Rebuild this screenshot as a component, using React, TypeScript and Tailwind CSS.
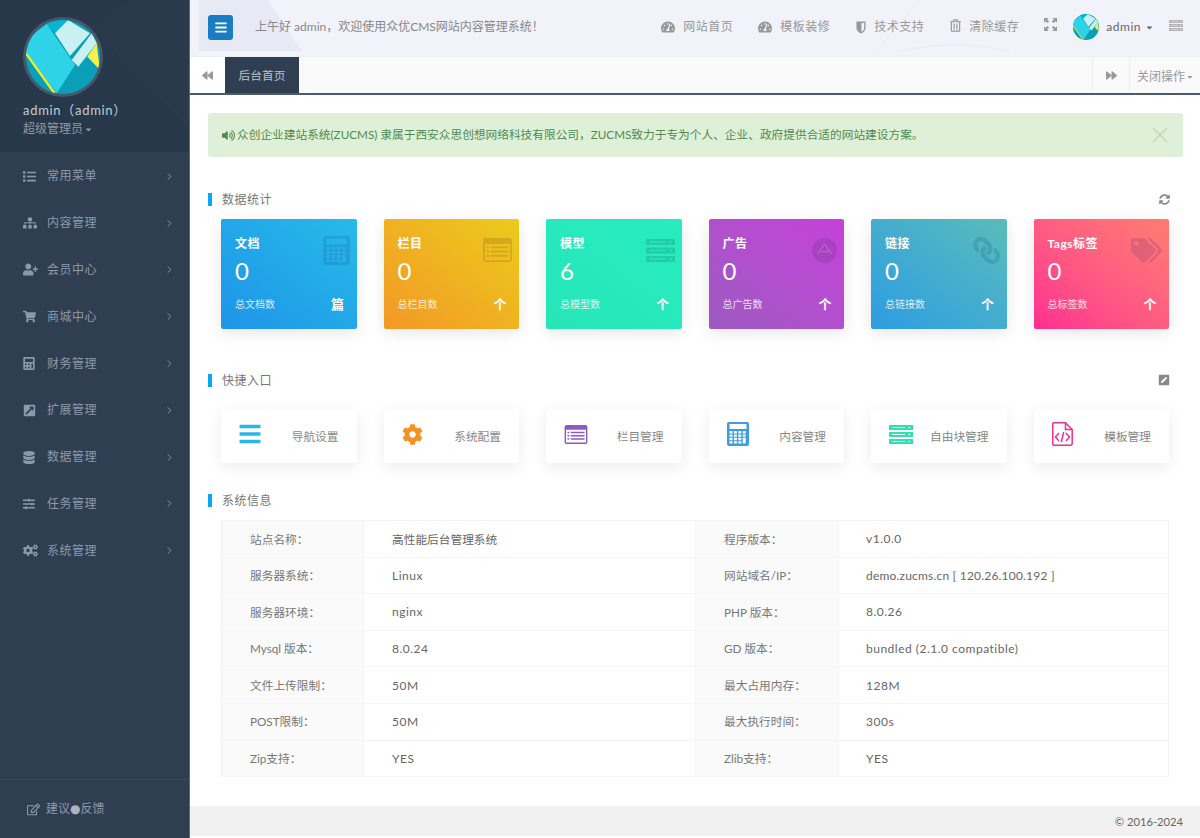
import { useId } from 'react'
import type { ReactNode } from 'react'
import {
  FaBackward,
  FaBars,
  FaCalculator,
  FaCaretDown,
  FaCog,
  FaCogs,
  FaDatabase,
  FaExternalLinkSquareAlt,
  FaForward,
  FaLink,
  FaList,
  FaPenSquare,
  FaRegEdit,
  FaRegTrashAlt,
  FaShoppingCart,
  FaSitemap,
  FaSlidersH,
  FaSyncAlt,
  FaTachometerAlt,
  FaTags,
  FaUserPlus,
  FaVolumeUp,
} from 'react-icons/fa'
import { FiChevronRight, FiX } from 'react-icons/fi'

function Avatar({ className }: { className: string }) {
  const id = useId()
  return (
    <svg viewBox="0 0 74 74" className={className}>
      <defs>
        <clipPath id={id}>
          <circle cx="37" cy="37" r="37" />
        </clipPath>
      </defs>
      <g clipPath={`url(#${id})`}>
        <rect width="74" height="74" fill="#0a9fb8" />
        <polygon points="18,0 46,0 40,20 20,6" fill="#05b5d2" />
        <polygon points="20.7,4 49,45 30.7,73.3 0,32.7 0,20" fill="#2fd3e8" />
        <polygon points="29,13.3 42,0 64,13.3 44,36" fill="#c9f1f1" />
        <polygon points="45.7,40 65.7,13.3 70.7,23.3 52.3,46.7" fill="#c9f1f1" />
        <polygon points="61.3,36.7 70.7,23.3 74,50" fill="#f5f04a" />
        <polygon points="0,31.5 29.5,72.5 27.5,74 0,35.5" fill="#f3e92f" />
      </g>
    </svg>
  )
}

function WindowIcon({ className }: { className: string }) {
  return (
    <svg viewBox="0 0 24 20" className={className} fill="currentColor">
      <path
        fillRule="evenodd"
        d="M2 0h20a2 2 0 0 1 2 2v16a2 2 0 0 1-2 2H2a2 2 0 0 1-2-2V2a2 2 0 0 1 2-2zm-.5 5v13c0 .3.2.5.5.5h20c.3 0 .5-.2.5-.5V5h-21z"
      />
      <path d="M3 7h2v1.6H3zM6.500 7H21v1.600H6.500zM3 10.500h2v1.600H3zM6.500 10.500H21v1.600H6.500zM3 14h2v1.600H3zM6.500 14H21v1.600H6.500z" />
    </svg>
  )
}

function ServerIcon({ className }: { className: string }) {
  return (
    <svg viewBox="0 0 24 19" className={className} fill="currentColor">
      <path
        fillRule="evenodd"
        d="M0 0h24v5H0zM3 2v1h13V2zM19.500 1.700v1.600h1.600V1.700zM0 7h24v5H0zM3 9v1h13V9zM19.500 8.700v1.600h1.600V8.700zM0 14h24v5H0zM3 16v1h13v-1zM19.500 15.700v1.600h1.600v-1.600z"
      />
    </svg>
  )
}

// cells are cut out so the card or tile behind shows through
const calcCells = [0, 1, 2, 3]
  .flatMap((c) =>
    [0, 1, 2, 3].map((r) => (c === 3 && r > 1 ? '' : `M${2.5 + c * 4.4} ${9 + r * 3.4}h3v2.400h-3z`)),
  )
  .join('')

function CalcIcon({ className }: { className: string }) {
  return (
    <svg viewBox="0 0 22 24" className={className} fill="currentColor">
      <path
        fillRule="evenodd"
        d={`M2 0h18a2 2 0 0 1 2 2v20a2 2 0 0 1-2 2H2a2 2 0 0 1-2-2V2a2 2 0 0 1 2-2zM2.500 2v5h17V2z${calcCells}M15.700 15.800h3v5.800h-3z`}
      />
    </svg>
  )
}

function FileCodeIcon({ className }: { className: string }) {
  return (
    <svg viewBox="0 0 21 24" className={className} fill="none" stroke="currentColor" strokeWidth="1.500">
      <path d="M1.500.8h12l6.700 6.700v14a1.700 1.700 0 0 1-1.700 1.700h-17A1.700 1.700 0 0 1 .8 21.500V1.500z" />
      <path d="M13.500.8v6.700h6.700M7 11l-3.500 4 3.500 4M14 11l3.500 4-3.500 4M11.700 10l-2.400 10" />
    </svg>
  )
}

function AdIcon({ className }: { className: string }) {
  return (
    <svg viewBox="0 0 24 24" className={className}>
      <circle cx="12" cy="12" r="12" fill="currentColor" />
      <path d="M5 15.500 12 6l7 9.500M8 13h8" fill="none" stroke="#fff" strokeOpacity="0.18" strokeWidth="1.200" />
    </svg>
  )
}

function ShieldIcon({ className }: { className: string }) {
  return (
    <svg viewBox="0 0 11 13" className={className} fill="currentColor">
      <path
        fillRule="evenodd"
        d="M.5 0h10v7.500C10.500 10 7.500 12 5.500 13 3.500 12 .5 10 .5 7.500zM6 1.500v9.700c1.500-.9 3-2.300 3-3.700v-6z"
      />
    </svg>
  )
}

function ExpandIcon({ className }: { className: string }) {
  return (
    <svg viewBox="0 0 14 14" className={className} fill="currentColor">
      <path d="M0 0h5L3.400 1.600 5.500 3.700 3.700 5.500 1.600 3.400 0 5zM14 0v5l-1.600-1.600-2.100 2.100-1.800-1.800 2.100-2.100L9 0zM0 14V9l1.600 1.600 2.100-2.100 1.800 1.800-2.100 2.100L5 14zM14 14H9l1.600-1.600-2.100-2.100 1.800-1.800 2.100 2.100L14 9z" />
    </svg>
  )
}

const menus: [string, ReactNode][] = [
  ['常用菜单', <FaList className="w-[13px] h-[13px]" />],
  ['内容管理', <FaSitemap className="w-[14px] h-[14px]" />],
  ['会员中心', <FaUserPlus className="w-[15px] h-[15px]" />],
  ['商城中心', <FaShoppingCart className="w-[13px] h-[13px]" />],
  ['财务管理', <FaCalculator className="w-[12px] h-[13px]" />],
  ['扩展管理', <FaExternalLinkSquareAlt className="w-[13px] h-[13px]" />],
  ['数据管理', <FaDatabase className="w-[12px] h-[13px]" />],
  ['任务管理', <FaSlidersH className="w-[12px] h-[12px]" />],
  ['系统管理', <FaCogs className="w-[15px] h-[15px]" />],
]

const topLinks: [string, ReactNode, string][] = [
  ['网站首页', <FaTachometerAlt className="w-[14px] h-[14px]" />, ''],
  ['模板装修', <FaTachometerAlt className="w-[14px] h-[14px]" />, ''],
  ['技术支持', <ShieldIcon className="w-[10px] h-[13px]" />, 'ml-[1px]'],
  ['清除缓存', <FaRegTrashAlt className="w-[11px] h-[15px] -mt-[3px]" />, 'ml-[1px]'],
]

const stats = [
  { title: '文档', value: '0', label: '总文档数', unit: '篇', bg: 'bg-gradient-to-tr from-[#2094e8] to-[#28bae8]', icon: <CalcIcon className="w-[27px] h-[29px] text-[#1a6fb0]/30" /> },
  { title: '栏目', value: '0', label: '总栏目数', unit: '个', bg: 'bg-gradient-to-tr from-[#f29826] to-[#ebcb1a]', icon: <WindowIcon className="w-[29px] h-[24px] text-[#b58a20]/45" /> },
  { title: '模型', value: '6', label: '总模型数', unit: '个', bg: 'bg-gradient-to-tr from-[#26e6b8] to-[#28ecc0]', icon: <ServerIcon className="w-[29px] h-[23px] text-[#1aa98c]/45" /> },
  { title: '广告', value: '0', label: '总广告数', unit: '个', bg: 'bg-gradient-to-tr from-[#9c5ac0] to-[#c640da]', icon: <AdIcon className="w-[25px] h-[25px] text-[#8a3aa0]/40" /> },
  { title: '链接', value: '0', label: '总链接数', unit: '个', bg: 'bg-gradient-to-tr from-[#2c9ce2] to-[#5abcba]', icon: <FaLink className="w-[27px] h-[27px] -scale-x-100 text-[#2a8a9c]/40" /> },
  { title: 'Tags标签', value: '0', label: '总标签数', unit: '个', bg: 'bg-gradient-to-tr from-[#ff2c90] to-[#ff7c70]', icon: <FaTags className="w-[31px] h-[25px] text-[#c85a78]/60" /> },
]

const quicks: [string, ReactNode][] = [
  ['导航设置', <FaBars className="w-[22px] h-[24px] text-[#29b6e6]" />],
  ['系统配置', <FaCog className="w-[21px] h-[21px] text-[#f49322]" />],
  ['栏目管理', <WindowIcon className="w-[24px] h-[19px] text-[#8d5bbf]" />],
  ['内容管理', <CalcIcon className="w-[22px] h-[24px] text-[#3c9de2]" />],
  ['自由块管理', <ServerIcon className="w-[24px] h-[19px] text-[#2fe0b0]" />],
  ['模板管理', <FileCodeIcon className="w-[21px] h-[24px] text-[#ee2f92]" />],
]

const info = [
  ['站点名称：', '高性能后台管理系统', '程序版本：', 'v1.0.0'],
  ['服务器系统：', 'Linux', '网站域名/IP：', 'demo.zucms.cn [ 120.26.100.192 ]'],
  ['服务器环境：', 'nginx', 'PHP 版本：', '8.0.26'],
  ['Mysql 版本：', '8.0.24', 'GD 版本：', 'bundled (2.1.0 compatible)'],
  ['文件上传限制：', '50M', '最大占用内存：', '128M'],
  ['POST限制：', '50M', '最大执行时间：', '300s'],
  ['Zip支持：', 'YES', 'Zlib支持：', 'YES'],
]

function SectionTitle({ title, action, className }: { title: string; action?: ReactNode; className: string }) {
  return (
    <div className={`flex items-center h-[18px] text-[#777] ${className}`}>
      <span className="w-[4px] h-[13px] bg-[#05a9f4]" />
      <span className="ml-[10px] pt-[2px]">{title}</span>
      <span className="ml-auto mr-[13px] text-[#888]">{action}</span>
    </div>
  )
}

export default function App() {
  return (
    <div className="flex w-[1200px] h-[838px] overflow-hidden bg-white text-xs tracking-[0.5px] font-['Lato','Noto_Sans_CJK_SC',sans-serif]">
      {/* Sidebar */}
      <aside className="flex flex-col w-[190px] shrink-0 bg-[#2f3f51] border-r border-[#5a6b7c] text-[#8b9aaa]">
        <div className="relative h-[152px] bg-[#27384a] overflow-hidden pl-[23px] pt-[17px]">
          <svg className="absolute inset-0 w-full h-full" viewBox="0 0 190 152" aria-hidden="true">
            <polygon points="95,30 130,0 190,0 190,130" fill="#2a3a4c" />
          </svg>
          <div className="relative w-[80px] h-[80px] rounded-full bg-[#46586a] p-[3px]">
            <Avatar className="w-[74px] h-[74px]" />
          </div>
          <p className="relative mt-[4px] text-[13px] leading-[18px] tracking-[0.7px] text-[#c3ccd6]">admin（admin）</p>
          <p className="relative mt-[1px] flex items-center leading-[18px] tracking-normal text-[#8d9bab]">
            超级管理员
            <FaCaretDown className="w-[9px] h-[9px] ml-[1px]" />
          </p>
        </div>
        <nav className="flex-1 pt-[1px]">
          {menus.map(([label, icon]) => (
            <div key={label} className="flex items-center h-[46.800px] pl-[23px] pr-[14px]">
              <span className="flex items-center w-[24px]">{icon}</span>
              <span>{label}</span>
              <FiChevronRight className="ml-auto w-[11px] h-[11px]" />
            </div>
          ))}
        </nav>
        <div className="flex items-center h-[59px] border-t border-[#384a5c] pl-[27px] tracking-normal">
          <FaRegEdit className="w-[13px] h-[13px] mr-[6px]" />
          建议<span className="font-['DejaVu_Sans'] text-[#a9b4c0]">●</span>反馈
        </div>
      </aside>

      {/* Main */}
      <div className="flex-1 min-w-0 flex flex-col">
        <header className="relative flex items-center h-[57px] bg-[#f1f2fa] border-b border-[#eceef2] pl-[18px] pr-[17px] pb-[2px] text-[#999]">
          <svg className="absolute inset-0 w-full h-full" viewBox="0 0 1010 57" aria-hidden="true">
            <polygon points="0,0 70,0 105,52 0,52" fill="#e7e9f5" />
            <polyline points="735,0 730,4 690,52" fill="none" stroke="#e8eaf4" />
            <path d="M715,52 C760,42 790,45 825,52" fill="none" stroke="#e8eaf4" />
          </svg>
          <button className="relative flex items-center justify-center w-[25px] h-[25px] rounded-[3px] bg-[#1a7cc3] text-white">
            <FaBars className="w-[12px] h-[13px]" />
          </button>
          <span className="relative ml-[22px] tracking-normal text-[#888]">上午好 admin，欢迎使用众优CMS网站内容管理系统！</span>
          <div className="relative ml-auto flex items-center gap-[25px]">
            {topLinks.map(([label, icon, extra]) => (
              <span key={label} className={`flex items-center gap-[8px] ${extra}`}>
                {icon}
                {label}
              </span>
            ))}
            <ExpandIcon className="w-[13px] h-[13px] -mt-[5px]" />
            <span className="flex items-center -ml-[9px] text-[#666]">
              <Avatar className="w-[26px] h-[26px] mr-[7px]" />
              admin
              <FaCaretDown className="w-[9px] h-[9px] ml-[4px]" />
            </span>
            <ServerIcon className="w-[14px] h-[11px] -ml-[10px] -mt-[3px] opacity-70" />
          </div>
        </header>

        <div className="flex items-stretch h-[38px] bg-[#fafafa] border-b-2 border-[#4c5b6b] text-[#999] tracking-normal">
          <button className="flex items-center justify-center w-[35px] bg-white">
            <FaBackward className="w-[11px] h-[11px]" />
          </button>
          <span className="flex items-center justify-center w-[74px] pt-[1px] bg-[#2f3f51] text-[11.7px] text-[#b9c3cd]">后台首页</span>
          <button className="ml-auto flex items-center justify-center w-[37px] border-l border-[#eeeeee]">
            <FaForward className="w-[11px] h-[11px]" />
          </button>
          <span className="flex items-center w-[71px] pl-[7px] pt-[3px] border-l border-[#eeeeee] whitespace-nowrap">
            关闭操作
            <FaCaretDown className="w-[8px] h-[8px] ml-[1px]" />
          </span>
        </div>

        <main className="flex-1 pl-[18px] pr-[17px]">
          <div className="flex items-center h-[44px] mt-[18px] pl-[14px] pr-[10px] rounded-[3px] bg-[#dff0d8] text-[11.7px] tracking-normal text-[#4f8a50]">
            <FaVolumeUp className="w-[13px] h-[13px] mr-[2px]" />
            众创企业建站系统(ZUCMS) 隶属于西安众思创想网络科技有限公司，ZUCMS致力于专为个人、企业、政府提供合适的网站建设方案。
            <FiX className="ml-auto w-[26px] h-[26px] text-[#c2d8c0]" strokeWidth={1.500} />
          </div>

          <SectionTitle className="mt-[33px] mb-[11px]" title="数据统计" action={<FaSyncAlt className="w-[11px] h-[11px]" />} />
          <div className="grid grid-cols-6 gap-x-[27px] ml-[13px] mr-[14px]">
            {stats.map((s) => (
              <div key={s.title} className={`relative h-[110px] rounded-[2px] px-[14px] text-white shadow-[0_4px_16px_rgba(0,0,0,0.1)] ${s.bg}`}>
                <div className="absolute top-[16px] right-[7px] flex items-center h-[30px]">{s.icon}</div>
                <p className="pt-[17px] leading-[16px] font-bold">{s.title}</p>
                <p className="mt-[5px] text-[24px] leading-[28px]">{s.value}</p>
                <div className="flex items-center justify-between mt-[11px] leading-[16px]">
                  <span className="text-[10px] tracking-normal opacity-80">{s.label}</span>
                  <span className="text-[13px] font-bold -mr-[2px]">{s.unit}</span>
                </div>
              </div>
            ))}
          </div>

          <SectionTitle className="mt-[42px] mb-[20px]" title="快捷入口" action={<FaPenSquare className="w-[12px] h-[12px]" />} />
          <div className="grid grid-cols-6 gap-x-[27px] ml-[13px] mr-[14px]">
            {quicks.map(([label, icon]) => (
              <div key={label} className="relative flex items-center justify-end h-[54px] rounded-[2px] bg-white pr-[18px] text-[11.7px] tracking-normal text-[#888] shadow-[0_4px_16px_rgba(0,0,0,0.08)]">
                <span className="absolute left-[18px] top-[13px] flex items-center h-[24px]">{icon}</span>
                <span className="whitespace-nowrap pt-[2px]">{label}</span>
              </div>
            ))}
          </div>

          <SectionTitle className="mt-[28px] mb-[11px]" title="系统信息" />
          <table className="ml-[13px] w-[948px] table-fixed border-collapse border border-[#f3f3f3] text-[#666]">
            <colgroup>
              <col className="w-[142px]" />
              <col className="w-[332px]" />
              <col className="w-[143px]" />
              <col />
            </colgroup>
            <tbody>
              {info.map((row) => (
                <tr key={row[0]} className="h-[36.600px] border-b border-[#f5f5f5]">
                  <td className="pl-[28px] pt-[1px] bg-[#fafafa] border-r border-[#f5f5f5] text-[11.7px] tracking-normal text-[#777]">{row[0]}</td>
                  <td className={`pl-[28px] pt-[1px] border-r border-[#f5f5f5] ${/[\u4e00-\u9fa5]/.test(row[1]) ? 'text-[11.7px] tracking-normal' : ''}`}>{row[1]}</td>
                  <td className="pl-[28px] pt-[1px] bg-[#fafafa] border-r border-[#f5f5f5] text-[11.7px] tracking-normal text-[#777]">{row[2]}</td>
                  <td className={`pl-[27px] pt-[1px] ${row[3].startsWith('demo') ? 'tracking-[0.2px]' : ''}`}>{row[3]}</td>
                </tr>
              ))}
            </tbody>
          </table>
        </main>

        <footer className="flex items-center justify-end h-[32px] pt-[2px] bg-[#f1f1f1] border-b-2 border-white pr-[17px] text-[11.2px] tracking-normal text-[#666]">© 2016-2024</footer>
      </div>
    </div>
  )
}
